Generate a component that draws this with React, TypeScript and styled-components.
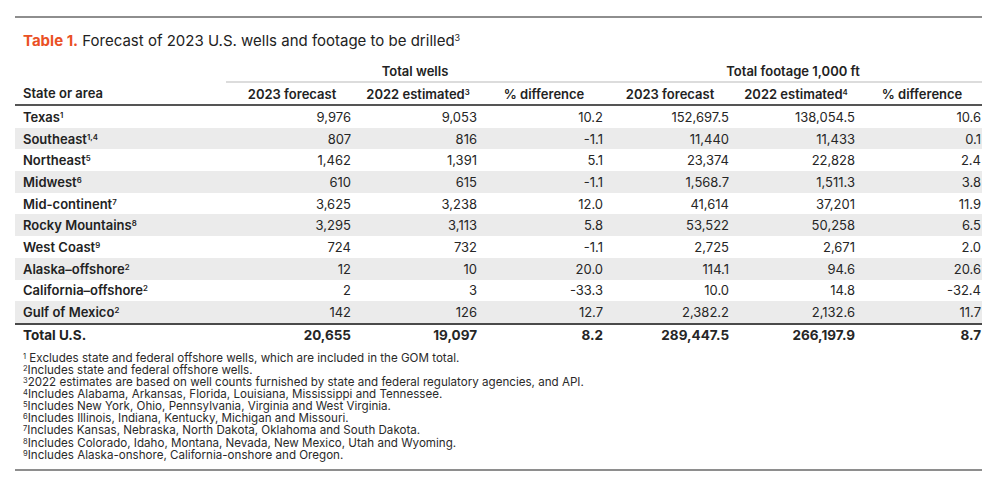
import styled, { createGlobalStyle } from 'styled-components'

type Row = {
  area: string
  note: string
  values: string[]
}

const rows: Row[] = [
  { area: 'Texas', note: '1', values: ['9,976', '9,053', '10.2', '152,697.5', '138,054.5', '10.6'] },
  { area: 'Southeast', note: '1,4', values: ['807', '816', '-1.1', '11,440', '11,433', '0.1'] },
  { area: 'Northeast', note: '5', values: ['1,462', '1,391', '5.1', '23,374', '22,828', '2.4'] },
  { area: 'Midwest', note: '6', values: ['610', '615', '-1.1', '1,568.7', '1,511.3', '3.8'] },
  { area: 'Mid-continent', note: '7', values: ['3,625', '3,238', '12.0', '41,614', '37,201', '11.9'] },
  { area: 'Rocky Mountains', note: '8', values: ['3,295', '3,113', '5.8', '53,522', '50,258', '6.5'] },
  { area: 'West Coast', note: '9', values: ['724', '732', '-1.1', '2,725', '2,671', '2.0'] },
  { area: 'Alaska–offshore', note: '2', values: ['12', '10', '20.0', '114.1', '94.6', '20.6'] },
  { area: 'California–offshore', note: '2', values: ['2', '3', '-33.3', '10.0', '14.8', '-32.4'] },
  { area: 'Gulf of Mexico', note: '2', values: ['142', '126', '12.7', '2,382.2', '2,132.6', '11.7'] },
]

const total = ['20,655', '19,097', '8.2', '289,447.5', '266,197.9', '8.7']

const footnotes: [string, string, boolean][] = [
  ['1', 'Excludes state and federal offshore wells, which are included in the GOM total.', true],
  ['2', 'Includes state and federal offshore wells.', false],
  ['3', '2022 estimates are based on well counts furnished by state and federal regulatory agencies, and API.', false],
  ['4', 'Includes Alabama, Arkansas, Florida, Louisiana, Mississippi and Tennessee.', false],
  ['5', 'Includes New York, Ohio, Pennsylvania, Virginia and West Virginia.', false],
  ['6', 'Includes Illinois, Indiana, Kentucky, Michigan and Missouri.', false],
  ['7', 'Includes Kansas, Nebraska, North Dakota, Oklahoma and South Dakota.', false],
  ['8', 'Includes Colorado, Idaho, Montana, Nevada, New Mexico, Utah and Wyoming.', false],
  ['9', 'Includes Alaska-onshore, California-onshore and Oregon.', false],
]

export default function App() {
  return (
    <>
      <GlobalStyle />
      <Page>
        <Title>
          <TitleLabel>Table 1.</TitleLabel> Forecast of 2023 U.S. wells and footage to be drilled
          <Sup>3</Sup>
        </Title>

        <Table>
          <colgroup>
            <col style={{ width: 211 }} />
            {[0, 1, 2, 3, 4, 5].map((i) => (
              <col key={i} style={{ width: 126 }} />
            ))}
          </colgroup>
          <thead>
            <tr>
              <GroupCell $empty />
              <GroupCell colSpan={3}>Total wells</GroupCell>
              <GroupCell colSpan={3}>Total footage 1,000 ft</GroupCell>
            </tr>
            <tr>
              <HeadCell $left>State or area</HeadCell>
              <HeadCell>2023 forecast</HeadCell>
              <HeadCell>
                2022 estimated<Sup>3</Sup>
              </HeadCell>
              <HeadCell>% difference</HeadCell>
              <HeadCell>2023 forecast</HeadCell>
              <HeadCell>
                2022 estimated<Sup>4</Sup>
              </HeadCell>
              <HeadCell>% difference</HeadCell>
            </tr>
          </thead>
          <tbody>
            {rows.map((row, index) => (
              <BodyRow key={row.area} $striped={index % 2 === 1} $last={index === rows.length - 1}>
                <AreaCell>
                  {row.area}
                  <Sup>{row.note}</Sup>
                </AreaCell>
                {row.values.map((value, i) => (
                  <NumCell key={i}>{value}</NumCell>
                ))}
              </BodyRow>
            ))}
            <TotalRow>
              <AreaCell>Total U.S.</AreaCell>
              {total.map((value, i) => (
                <NumCell key={i}>{value}</NumCell>
              ))}
            </TotalRow>
          </tbody>
        </Table>

        <Notes>
          {footnotes.map(([mark, text, spaced]) => (
            <Note key={mark}>
              <NoteMark>{mark}</NoteMark>
              {spaced ? ' ' : ''}
              {text}
            </Note>
          ))}
        </Notes>
      </Page>
    </>
  )
}

const GlobalStyle = createGlobalStyle`
  html, body {
    margin: 0;
    padding: 0;
    background: #ffffff;
  }
  body {
    font-family: Inter, "Open Sans", "Liberation Sans", sans-serif;
    color: #222222;
  }
`

const Page = styled.div`
  width: 967px;
  margin: 16px 0 0 15px;
  border-top: 2px solid #8e8e8e;
  border-bottom: 2px solid #8e8e8e;
  padding-bottom: 8px;
`

const Title = styled.div`
  margin: 13px 0 0 8px;
  height: 20px;
  line-height: 20px;
  font-size: 15px;
  color: #222222;
`

const TitleLabel = styled.span`
  color: #ea5125;
  font-weight: 700;
`

const Sup = styled.sup`
  font-size: 0.6em;
  line-height: 0;
  vertical-align: 0.55em;
  font-weight: inherit;
`

const Table = styled.table`
  width: 967px;
  table-layout: fixed;
  border-collapse: collapse;
  font-size: 13px;
`

const GroupCell = styled.th<{ $empty?: boolean }>`
  height: 28px;
  padding: 0 0 2px;
  vertical-align: bottom;
  line-height: 16px;
  font-weight: 600;
  text-align: center;
  border-bottom: ${({ $empty }) => ($empty ? 'none' : '2px solid #dcdcdc')};
`

const HeadCell = styled.th<{ $left?: boolean }>`
  height: 21px;
  padding: ${({ $left }) => ($left ? '0 0 0 8px' : '0 0 0 6px')};
  line-height: 16px;
  font-weight: 600;
  text-align: ${({ $left }) => ($left ? 'left' : 'center')};
  border-bottom: 2px solid #555555;
  white-space: nowrap;
`

const BodyRow = styled.tr<{ $striped: boolean; $last: boolean }>`
  background: ${({ $striped }) => ($striped ? '#ebebeb' : 'transparent')};
  border-bottom: ${({ $last }) => ($last ? '2px solid #4a4a4a' : 'none')};

  td {
    height: 21.7px;
  }
`

const TotalRow = styled.tr`
  td {
    height: 21px;
    font-weight: 700;
    font-size: 13.5px;
  }
`

const AreaCell = styled.td`
  padding: 0 0 0 8px;
  line-height: 16px;
  font-weight: 600;
  white-space: nowrap;
`

const NumCell = styled.td`
  padding: 0 1px 0 0;
  line-height: 16px;
  text-align: right;
  color: #262626;
`

const Notes = styled.div`
  margin: 6px 0 0 8px;
  font-size: 11.6px;
  line-height: 12.1px;
  color: #2a2a2a;
`

const Note = styled.div`
  white-space: nowrap;
`

const NoteMark = styled.sup`
  font-size: 0.65em;
  line-height: 0;
  vertical-align: 0.45em;
`
